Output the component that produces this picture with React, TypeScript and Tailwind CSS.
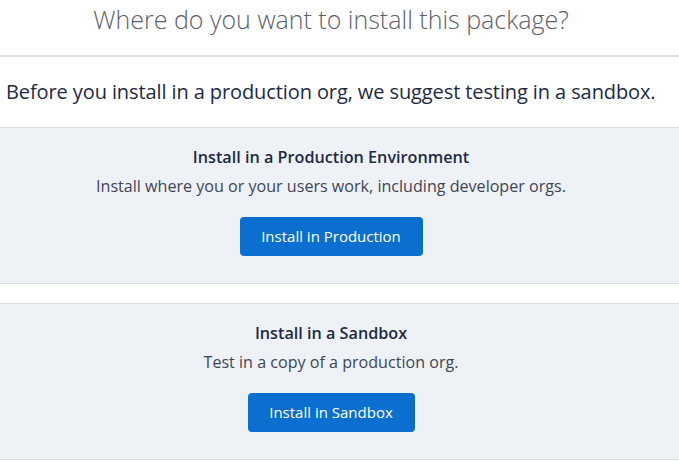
export default function App() {
  return (
    <div className="w-[679px] h-[461px] overflow-hidden bg-white" style={{ fontFamily: '"Open Sans", "Liberation Sans", sans-serif' }}>
      <div className="h-[57px] flex justify-center pt-[2px] pr-[17px] border-b-2 border-[#dfe1e5]">
        <h1 className="text-[25px] leading-[34px] font-light text-[#5b5f6b]">Where do you want to install this package?</h1>
      </div>
      <div className="h-[71px] flex items-center pl-[6px] border-b border-[#dcdfe4]">
        <p className="text-[20px] text-[#1d2a44] tracking-[-0.1px]">Before you install in a production org, we suggest testing in a sandbox.</p>
      </div>
      <Card
        title="Install in a Production Environment"
        text="Install where you or your users work, including developer orgs."
        button="Install in Production"
        width="w-[183px]"
        border="border-b"
        height="h-[156px]"
      />
      <div className="h-[19px]" />
      <Card
        title="Install in a Sandbox"
        text="Test in a copy of a production org."
        button="Install in Sandbox"
        width="w-[167px]"
        border="border-y"
        height="h-[157px]"
      />
    </div>
  )
}

function Card({ title, text, button, width, border, height }: { title: string; text: string; button: string; width: string; border: string; height: string }) {
  return (
    <div className={`${height} ${border} bg-[#eef1f6] border-[#dcdfe4] flex flex-col items-center pt-[17px] pr-[17px]`}>
      <h2 className="text-[16.2px] font-semibold text-[#1d2a44] leading-[24px]">{title}</h2>
      <p className="mt-[5px] text-[16.1px] text-[#3e4656] leading-[24px]">{text}</p>
      <button className={`${width} mt-[19px] h-[39px] rounded-[4px] bg-[#0b6fd0] text-white text-[15px]`}>
        {button}
      </button>
    </div>
  )
}
